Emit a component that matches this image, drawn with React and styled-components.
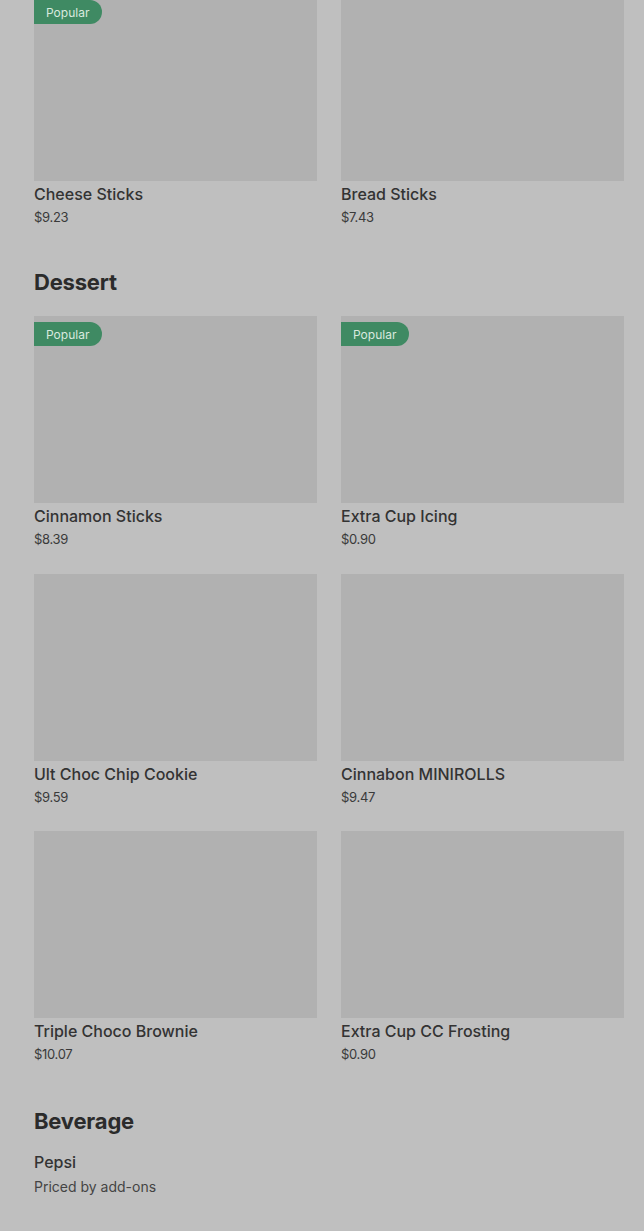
import React from 'react'
import styled, { createGlobalStyle } from 'styled-components'

const GlobalStyle = createGlobalStyle`
  html, body {
    margin: 0;
    padding: 0;
    background: #bfbfbf;
  }
  body {
    font-family: Inter, "Noto Sans", "Liberation Sans", sans-serif;
    color: #2f2f2f;
    overflow: hidden;
  }
`

const sections = [
  {
    title: null,
    items: [
      { name: 'Cheese Sticks', price: '$9.23', popular: true },
      { name: 'Bread Sticks', price: '$7.43' },
    ],
  },
  {
    title: 'Dessert',
    items: [
      { name: 'Cinnamon Sticks', price: '$8.39', popular: true },
      { name: 'Extra Cup Icing', price: '$0.90', popular: true },
      { name: 'Ult Choc Chip Cookie', price: '$9.59' },
      { name: 'Cinnabon MINIROLLS', price: '$9.47' },
      { name: 'Triple Choco Brownie', price: '$10.07' },
      { name: 'Extra Cup CC Frosting', price: '$0.90' },
    ],
  },
]

const drinks = [
  { name: 'Pepsi', note: 'Priced by add-ons' },
  { name: 'Mountain Dew', note: 'Priced by add-ons' },
]

const App = () => {
  return (
    <>
      <GlobalStyle />
      <Page>
        {sections.map((s, i) => (
          <Section key={i}>
            {s.title && <Heading>{s.title}</Heading>}
            <Grid>
              {s.items.map((item) => (
                <Card key={item.name}>
                  <Thumb>
                    {item.popular && <Badge>Popular</Badge>}
                  </Thumb>
                  <Name>{item.name}</Name>
                  <Price>{item.price}</Price>
                </Card>
              ))}
            </Grid>
          </Section>
        ))}
        <Section $gapAbove={43}>
          <Heading>Beverage</Heading>
          <List>
            {drinks.map((d) => (
              <Row key={d.name}>
                <Name>{d.name}</Name>
                <Note>{d.note}</Note>
              </Row>
            ))}
          </List>
        </Section>
      </Page>
    </>
  )
}

export default App

const Page = styled.div`
  margin-top: -6px;
  padding: 0 20px 0 34px;
  display: flex;
  flex-direction: column;
  gap: 41px;
`

const Section = styled.section`
  display: flex;
  flex-direction: column;
  margin-top: ${(p) => (p.$gapAbove ? p.$gapAbove - 41 : 0)}px;
`

const Heading = styled.h2`
  margin: 0 0 20px;
  font-size: 22px;
  line-height: 28px;
  font-weight: 700;
  letter-spacing: -0.2px;
  color: #2b2b2b;
`

const Grid = styled.div`
  display: grid;
  grid-template-columns: 1fr 1fr;
  column-gap: 24px;
  row-gap: 24.5px;
`

const Card = styled.div`
  display: flex;
  flex-direction: column;
`

const Thumb = styled.div`
  position: relative;
  height: 187px;
  background: #b1b1b1;
`

const Badge = styled.span`
  position: absolute;
  top: 6px;
  left: 0;
  height: 24px;
  padding: 0 13px 0 12px;
  display: flex;
  align-items: center;
  background: #3f8a63;
  color: #d9e9df;
  font-size: 12px;
  border-radius: 0 12px 12px 0;
`

const Name = styled.div`
  margin-top: 3px;
  font-size: 16px;
  line-height: 20px;
  font-weight: 500;
  color: #333333;
`

const Price = styled.div`
  margin-top: 3px;
  font-size: 13px;
  line-height: 20px;
  color: #3a3a3a;
  letter-spacing: -0.3px;
`

const List = styled.div`
  display: flex;
  flex-direction: column;
  gap: 29px;
  margin-top: -6px;
`

const Row = styled.div`
  display: flex;
  flex-direction: column;
`

const Note = styled.div`
  margin-top: 5px;
  font-size: 14px;
  line-height: 20px;
  color: #444444;
`
